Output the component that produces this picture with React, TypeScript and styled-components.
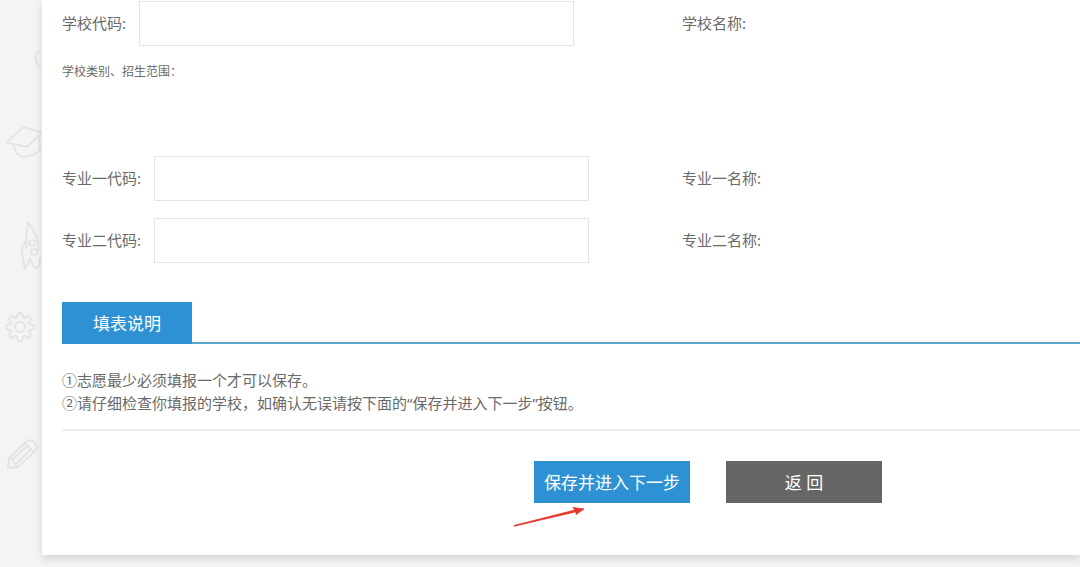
import React from "react";
import styled, { createGlobalStyle } from "styled-components";

const GlobalStyle = createGlobalStyle`
  *, *::before, *::after { box-sizing: border-box; }
  body {
    margin: 0;
    background: #f4f4f4;
    color: #6a6a6a;
    font-family: "Noto Sans", "Noto Sans CJK SC", sans-serif;
    font-size: 15px;
    line-height: 23px;
    overflow-x: hidden;
  }
`;

const Page = styled.div`
  position: relative;
  padding: 0 0 12px 42px;
  overflow: hidden;
`;

const Wallpaper = styled.svg`
  position: absolute;
  top: 0;
  left: 0;
  fill: none;
  stroke: #e4e4e4;
  stroke-width: 2;
  stroke-linejoin: round;
  stroke-linecap: round;
`;

const Panel = styled.main`
  position: relative;
  padding: 1px 0 52px 20px;
  background: #fff;
  box-shadow: 0 4px 8px rgba(0, 0, 0, 0.13);
`;

const Row = styled.div`
  display: grid;
  grid-template-columns: 620fr 398fr;
  align-items: center;
`;

const MajorRows = styled.div`
  display: grid;
  gap: 17px;
  margin-top: 74px;
`;

const Field = styled.div`
  display: flex;
  align-items: center;
  gap: 13px;
`;

const Input = styled.input`
  width: 435px;
  height: 45px;
  padding: 0 12px;
  border: 1px solid #e4e4e4;
  border-radius: 0;
  background: #fff;
  color: inherit;
  font: inherit;
  outline: none;
`;

const Category = styled.p`
  margin: 16px 0 0;
  font-size: 12px;
  line-height: 20px;
`;

const TabBar = styled.div`
  display: flex;
  margin-top: 39px;
  border-bottom: 2px solid #5ba5c8;
`;

const TabTitle = styled.h2`
  width: 130px;
  height: 42px;
  margin: 0 0 -2px;
  background: #2d91d3;
  color: #fff;
  font-size: 17px;
  font-weight: 400;
  line-height: 44px;
  text-align: center;
`;

const Notes = styled.div`
  padding: 25px 0 14px;
  border-bottom: 2px solid #eee;

  p { margin: 0; }
`;

const Actions = styled.div`
  display: flex;
  gap: 36px;
  padding: 30px 0 0 472px;
`;

const ButtonHolder = styled.div`
  position: relative;
`;

const Button = styled.button<{ $primary?: boolean }>`
  display: block;
  width: 156px;
  height: 42px;
  padding: 0 0 2px;
  border: 0;
  background: ${(p) => (p.$primary ? "#2d91d3" : "#666")};
  color: #fff;
  font-family: inherit;
  font-size: 17px;
  white-space: nowrap;
  cursor: pointer;
`;

const Arrow = styled.svg`
  position: absolute;
  top: 44px;
  left: -22px;
`;

const toothAngles = [0, 45, 90, 135, 180, 225, 270, 315];

const gearPath =
  toothAngles
    .map((deg, i) => {
      const at = (offset: number, r: number) => {
        const a = ((deg + offset) * Math.PI) / 180;
        return `${(20 + r * Math.cos(a)).toFixed(1)} ${(327 + r * Math.sin(a)).toFixed(1)}`;
      };
      return `${i ? "L" : "M"}${at(-7, 14)}L${at(7, 14)}L${at(19, 10)}L${at(26, 10)}`;
    })
    .join("") + "Z";

function SchoolWallpaper() {
  return (
    <Wallpaper width="48" height="567" viewBox="0 0 48 567" aria-hidden="true">
      <path d="M40 50C34 54 34 62 40 67" />
      <path d="M7 142L22 128Q24 127 27 128L40 132Q42 133 39 135L29 145Q27 147 24 146L8 143Z" />
      <path d="M14 146L17 154Q23 159 32 155Q38 153 40 149L39 137" />
      <path d="M28 222Q26 234 26 248M28 222Q36 233 38 242L38 250M26 240Q21 247 22 254L25 269L30 259L35 268Q40 269 40 258" />
      <circle cx="32" cy="243" r="3" />
      <circle cx="34" cy="252" r="3" />
      <path d={gearPath} />
      <circle cx="20" cy="327" r="5" />
      <path d="M8 468L9 458L27 441Q31 439 35 443Q38 447 36 450L18 467ZM9 458L13 459L14 463L18 467M25 443L34 452M13 459L27 446M17 463L30 450" />
    </Wallpaper>
  );
}

type MajorProps = { id: string; ordinal: string };

function MajorRow({ id, ordinal }: MajorProps) {
  return (
    <Row>
      <Field>
        <label htmlFor={id}>专业{ordinal}代码:</label>
        <Input id={id} type="text" />
      </Field>
      <span>专业{ordinal}名称:</span>
    </Row>
  );
}

export default function App() {
  return (
    <>
      <GlobalStyle />
      <Page>
        <SchoolWallpaper />
        <Panel>
          <Row>
            <Field>
              <label htmlFor="school">学校代码:</label>
              <Input id="school" type="text" />
            </Field>
            <span>学校名称:</span>
          </Row>
          <Category>学校类别、招生范围：</Category>
          <MajorRows>
            <MajorRow id="major-1" ordinal="一" />
            <MajorRow id="major-2" ordinal="二" />
          </MajorRows>
          <TabBar>
            <TabTitle>填表说明</TabTitle>
          </TabBar>
          <Notes>
            <p>①志愿最少必须填报一个才可以保存。</p>
            <p>②请仔细检查你填报的学校，如确认无误请按下面的“保存并进入下一步”按钮。</p>
          </Notes>
          <Actions>
            <ButtonHolder>
              <Button type="button" $primary>保存并进入下一步</Button>
              <Arrow width="76" height="26" viewBox="0 0 76 26" aria-hidden="true">
                <path
                  d="M2 20.500L63 5L61 2.500L72 4L64 9.500L64 6.800L2 21.200Z"
                  fill="#e5352b"
                  stroke="#e5352b"
                  strokeWidth="0.8"
                  strokeLinejoin="round"
                />
              </Arrow>
            </ButtonHolder>
            <Button type="button">返 回</Button>
          </Actions>
        </Panel>
      </Page>
    </>
  );
}
